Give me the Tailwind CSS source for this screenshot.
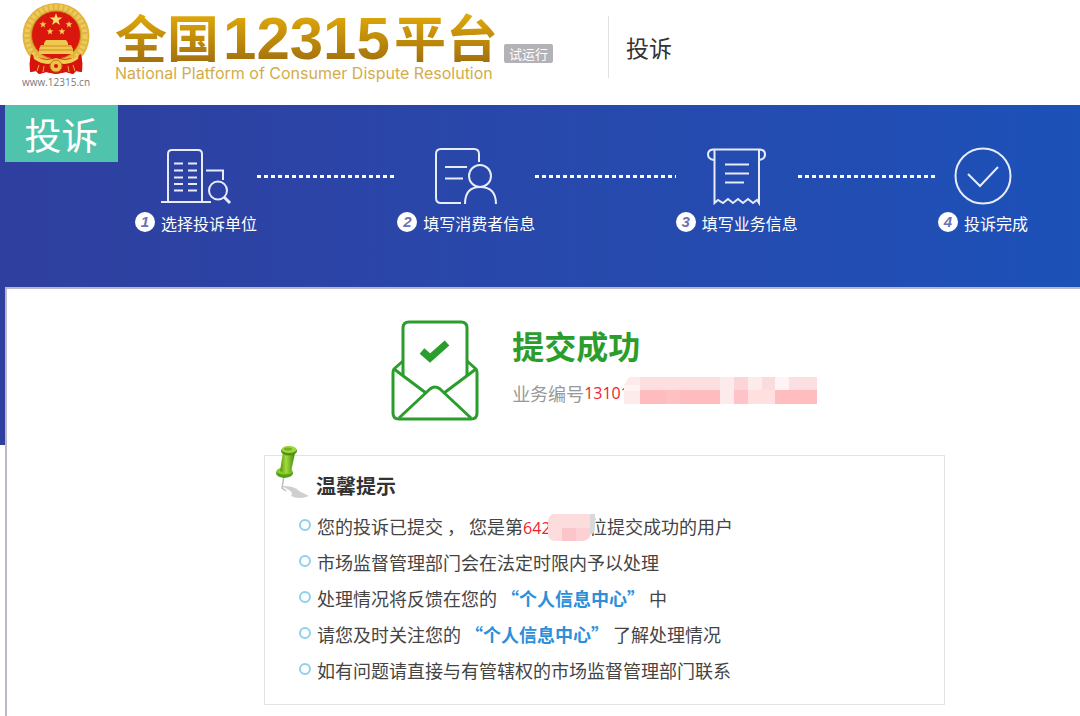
<!DOCTYPE html>
<html lang="zh-CN">
	<head>
		<meta charset="UTF-8" />
		<meta name="viewport" content="width=device-width, initial-scale=1.0" />
		<title>全国12315平台</title>
		<script src="https://cdn.jsdelivr.net/npm/@tailwindcss/browser@4"></script>
	</head>
	<body class="bg-white text-[#444] font-['Noto_Sans_CJK_SC',sans-serif]">
		<header class="flex items-start h-[105px] pl-[22px]">
			<div class="flex flex-col items-center w-[68px] mr-[25px] pt-[3px] shrink-0">
				<svg class="w-[68px] h-[72px]" viewBox="0 0 68 72">
					<path d="M9 50 Q7 60 8 69 L14 68 L17 71 L24 69 L34 71 L44 69 L51 71 L54 68 L60 69 Q61 60 59 50Z" fill="#d6140c" />
					<ellipse cx="34" cy="33" rx="33.500" ry="33" fill="#e3b53c" />
					<ellipse cx="34" cy="33" rx="29" ry="29" fill="none" stroke="#ecca60" stroke-width="5" stroke-dasharray="3 2" />
					<ellipse cx="34" cy="32" rx="24.500" ry="24" fill="#da170d" stroke="#c88f20" />
					<path d="M34 10l1.600 4.500h4.700l-3.800 2.900 1.400 4.600-3.900-2.700-3.900 2.700 1.400-4.600-3.800-2.900h4.700z" fill="#f8dc70" />
					<g fill="#f5cf55">
						<path id="star" d="M21 18l.900 2.300h2.500l-2 1.600.7 2.500-2.100-1.500-2.100 1.500.7-2.500-2-1.600h2.500z" />
						<use href="#star" x="7" y="7" />
						<use href="#star" x="19" y="7" />
						<use href="#star" x="26" y="0" />
					</g>
					<path d="M24 37h20l2 3v2h3l2 4v5H17v-5l2-4h3v-2z" fill="#f0c850" />
					<path d="M19 43h30M17 47h34" stroke="#c98d1c" />
					<path d="M9 51Q7 60 8 69L14 68L17 71L24 69L34 71L44 69L51 71L54 68L60 69Q61 60 59 51Q46 59 34 54Q22 59 9 51Z" fill="#d6140c" />
					<path d="M11 51Q22 60 34 55Q46 60 57 51L56 56Q45 64 34 59Q23 64 12 56Z" fill="#f2cb50" />
					<circle cx="34" cy="63" r="6" fill="#edc248" stroke="#b77a14" />
					<circle cx="34" cy="63" r="2" fill="#d6140c" />
					<path d="M17 62L15 68M22 63L21 69M51 62L53 68M46 63L47 69" stroke="#edb23e" />
				</svg>
				<div class="text-[10px] leading-[14px] text-[#777] font-['Open_Sans',sans-serif]">www.12315.cn</div>
			</div>
			<div class="flex flex-col whitespace-nowrap shrink-0">
				<div class="h-[62px] leading-[74px] text-[52px] font-bold text-transparent bg-clip-text bg-linear-to-b from-[#e2ab08] from-20% to-[#a3710c]">
					全国<span class="mx-1 text-[60px] font-['Liberation_Sans',sans-serif]">12315</span>平台
				</div>
				<div class="text-[16px] leading-[22px] text-[#d3ac4b] font-[Inter,sans-serif]">
					National Platform of Consumer Dispute Resolution
				</div>
			</div>
			<span class="mt-[44px] ml-[6px] w-[49px] text-center text-[13px] leading-[19px] rounded-xs bg-[#b2b2b7] text-white shrink-0">试运行</span>
			<div class="mt-[16px] ml-[55px] pl-[17px] h-[62px] leading-[62px] border-l border-[#e2e2e2] text-[23px] text-[#333] whitespace-nowrap">投诉</div>
		</header>

		<div class="bg-linear-to-r from-[#2f3f9f] to-[#1c51b8] bg-no-repeat bg-[length:100%_340px]">
			<section class="relative h-[182px] pt-[42px] pl-[135px] pr-[52px]">
				<h1 class="absolute left-[5px] top-0 w-[113px] h-[57px] leading-[59px] bg-[#4fc3ab] text-white text-center text-[37px]">投诉</h1>
				<ol class="flex items-start text-white text-[16px] whitespace-nowrap">
					<li class="flex flex-col items-center">
						<svg class="w-[72px] h-[60px]" viewBox="0 0 72 60" fill="none" stroke="#e8ecfa" stroke-width="2">
							<path d="M1 55H51M8 55V7Q8 3 12 3H38Q42 3 42 7V55M46 23.500H63V33" />
							<path d="M14 16.500h9M28 16.500h9M14 23.500h9M28 23.500h9M14 30.500h9M28 30.500h9M14 37h9M28 37h9M14 43.500h9M28 43.500h9" />
							<circle cx="58" cy="43.500" r="9" />
							<path d="M64 50L70 56" stroke-width="3" />
						</svg>
						<div class="flex items-center gap-[6px] mt-[2px] leading-[28px]">
							<span class="size-5 mb-[2px] rounded-full bg-white text-center text-[15px] leading-[20px] font-bold italic text-[#6b73b4] font-['Liberation_Sans',sans-serif]">1</span>
							选择投诉单位
						</div>
					</li>
					<li class="flex-1 mt-[28px] h-[3px] bg-[repeating-linear-gradient(90deg,white_0_4px,transparent_4px_7px)]"></li>
					<li class="flex flex-col items-center">
						<svg class="w-[66px] h-[60px]" viewBox="0 0 66 60" fill="none" stroke="#e8ecfa" stroke-width="2">
							<path d="M28 56H8Q3 56 3 51V7Q3 2 8 2H41Q46 2 46 7V15M12 20H34M12 31.500H30" />
							<circle cx="47" cy="29" r="11" />
							<path d="M32 57Q32 40 47 40Q63 40 63 57" />
						</svg>
						<div class="flex items-center gap-[6px] mt-[2px] leading-[28px]">
							<span class="size-5 mb-[2px] rounded-full bg-white text-center text-[15px] leading-[20px] font-bold italic text-[#6b73b4] font-['Liberation_Sans',sans-serif]">2</span>
							填写消费者信息
						</div>
					</li>
					<li class="flex-1 mt-[28px] h-[3px] bg-[repeating-linear-gradient(90deg,white_0_4px,transparent_4px_7px)]"></li>
					<li class="flex flex-col items-center">
						<svg class="w-[60px] h-[60px]" viewBox="0 0 60 60" fill="none" stroke="#e8ecfa" stroke-width="2">
							<path d="M7 13Q1 12 1 7.500T6 2.500H53Q58 3 58 7.500T52 13M7.500 3V56L11 53L16 56L21 52L26 56L31 52L36 56L41 52L46 56L50 53L52 56V3" />
							<path d="M18 17.500H42M18 26.500H42M18 35.500H37" />
						</svg>
						<div class="flex items-center gap-[6px] mt-[2px] leading-[28px]">
							<span class="size-5 mb-[2px] rounded-full bg-white text-center text-[15px] leading-[20px] font-bold italic text-[#6b73b4] font-['Liberation_Sans',sans-serif]">3</span>
							填写业务信息
						</div>
					</li>
					<li class="flex-1 mt-[28px] h-[3px] bg-[repeating-linear-gradient(90deg,white_0_4px,transparent_4px_7px)]"></li>
					<li class="flex flex-col items-center">
						<svg class="w-[60px] h-[60px]" viewBox="0 0 60 60" fill="none" stroke="#e8ecfa" stroke-width="2">
							<circle cx="30" cy="29" r="27.500" />
							<path d="M15 27L27 39L45 20" />
						</svg>
						<div class="flex items-center gap-[6px] mt-[2px] leading-[28px]">
							<span class="size-5 mb-[2px] rounded-full bg-white text-center text-[15px] leading-[20px] font-bold italic text-[#6b73b4] font-['Liberation_Sans',sans-serif]">4</span>
							投诉完成
						</div>
					</li>
				</ol>
			</section>

			<main class="ml-[5px] min-h-[429px] bg-white border-t-2 border-l-2 border-[#b9bac6] pt-[31px] pl-[257px] pr-[135px] pb-[11px]">
				<div class="flex justify-center gap-[32px] mb-[33px]">
					<svg class="w-[88px] h-[102px] shrink-0 overflow-visible" viewBox="0 0 88 102" fill="none" stroke="#2b9d2c" stroke-width="3" stroke-linejoin="round">
						<path d="M11 56V8Q11 2 17 2H69Q75 2 75 8V56" />
						<path d="M11 41L2 49Q1 50 1 53V93Q1 99 7 99H79Q85 99 85 93V53Q85 50 84 49L75 41" />
						<path d="M2 49L34 73M84 49L52 73M7 98L38 69Q43 65 48 69L79 98" />
						<path d="M30 31L38 38L55 23" stroke-width="7" stroke-linejoin="miter" />
					</svg>
					<div class="pt-px whitespace-nowrap">
						<h2 class="text-[32px] leading-[48px] font-bold text-[#2b9d2c]">提交成功</h2>
						<p class="flex items-center pt-[6px] text-[18px] leading-[36px] text-[#999]">
							业务编号<span class="text-[16px] text-[#f0222b] font-['Open_Sans',sans-serif]">13101</span>
							<!-- masked digits -->
							<svg class="relative -ml-[6px] -mt-[6px] w-[193px] h-[27px]" viewBox="0 0 193 27" shape-rendering="crispEdges">
								<path d="M5 0H193V27H0V8Z" fill="#fdebeb" />
								<path d="M16 0H96V13H16Z" fill="#fddfe0" />
								<path d="M0 8H16V14H0Z" fill="#fff3f3" />
								<path d="M16 13H96V27H16Z" fill="#ffbcbf" />
								<path d="M42 13H56V27H42Z" fill="#ffc0c3" />
								<path d="M110 0H124V13H110Z" fill="#fbd5d7" />
								<path d="M110 13H124V27H110Z" fill="#ffc2c6" />
								<path d="M138 0H151V13H138Z" fill="#fbdcdd" />
								<path d="M124 13H151V27H124Z" fill="#ffdfe0" />
								<path d="M151 0H165V13H151Z" fill="#fff3f5" />
								<path d="M165 0H193V13H165Z" fill="#fcdfe0" />
								<path d="M151 13H193V27H151Z" fill="#ffbdc0" />
							</svg>
						</p>
					</div>
				</div>

				<section class="relative border border-[#e3e3e3] pt-[16px] pb-[16px] pl-[34px]">
					<svg class="absolute left-[10px] -top-[11px] w-[36px] h-[56px]" viewBox="0 0 36 56">
						<defs>
							<linearGradient id="pin">
								<stop offset="0" stop-color="#4f9710" />
								<stop offset=".4" stop-color="#a6dc3b" />
								<stop offset="1" stop-color="#3f850d" />
							</linearGradient>
						</defs>
						<path d="M8 41Q20 41 24 46L34 51Q24 55 16 51Q20 47 8 42Z" fill="#cfcfcf" />
						<path d="M9 31L7 43L11 46" stroke="#bdbdbd" stroke-width="1.500" fill="none" />
						<ellipse cx="9.500" cy="28" rx="8.500" ry="5" fill="#57a015" />
						<ellipse cx="9.500" cy="26" rx="8" ry="3.500" fill="#8acb2b" />
						<path d="M8 7L20 8L16 27Q11 30 5 26Z" fill="url(#pin)" />
						<ellipse cx="14" cy="6" rx="8" ry="4.500" fill="#4b9411" />
						<ellipse cx="14" cy="4.500" rx="7.500" ry="3.500" fill="#9fd63a" />
						<ellipse cx="13" cy="4" rx="4" ry="1.500" fill="#6fb321" />
					</svg>
					<h3 class="pl-[17px] mb-[8px] text-[20px] leading-[28px] font-bold text-[#333]">温馨提示</h3>
					<ul class="text-[18px] leading-[36px]">
						<li class="flex items-center gap-[6px] h-[36px]">
							<span class="size-3 mb-[2px] rounded-full border-2 border-[#8fd0ee] shrink-0"></span>
							<p>您的投诉已提交 ， 您是第<span class="relative inline-block w-[66px] leading-[24px] text-[16px] text-[#f0222b] font-['Open_Sans',sans-serif]">642<svg class="absolute left-[25px] -top-[2px] w-[47px] h-[27px]" viewBox="0 0 47 27">
								<path d="M34 0H47V15Q47 20 41 21H34Z" fill="#d9d9db" />
								<path d="M5 0H42V22Q40 27 32 27H8Q0 27 0 20V8Q0 2 5 0Z" fill="#fddcdd" />
								<path d="M14 14H28V27H14Z" fill="#fcc5ca" />
								<path d="M28 14H42V22Q40 27 32 27H28Z" fill="#fdd0d3" />
							</svg></span>位提交成功的用户</p>
						</li>
						<li class="flex items-center gap-[6px] h-[36px]">
							<span class="size-3 mb-[2px] rounded-full border-2 border-[#8fd0ee] shrink-0"></span>
							<p>市场监督管理部门会在法定时限内予以处理</p>
						</li>
						<li class="flex items-center gap-[6px] h-[36px]">
							<span class="size-3 mb-[2px] rounded-full border-2 border-[#8fd0ee] shrink-0"></span>
							<p>处理情况将反馈在您的 <a href="#" class="font-bold text-[#2d8fdb]">“个人信息中心”</a> 中</p>
						</li>
						<li class="flex items-center gap-[6px] h-[36px]">
							<span class="size-3 mb-[2px] rounded-full border-2 border-[#8fd0ee] shrink-0"></span>
							<p>请您及时关注您的 <a href="#" class="font-bold text-[#2d8fdb]">“个人信息中心”</a> 了解处理情况</p>
						</li>
						<li class="flex items-center gap-[6px] h-[36px]">
							<span class="size-3 mb-[2px] rounded-full border-2 border-[#8fd0ee] shrink-0"></span>
							<p>如有问题请直接与有管辖权的市场监督管理部门联系</p>
						</li>
					</ul>
				</section>
			</main>
		</div>
	</body>
</html>
